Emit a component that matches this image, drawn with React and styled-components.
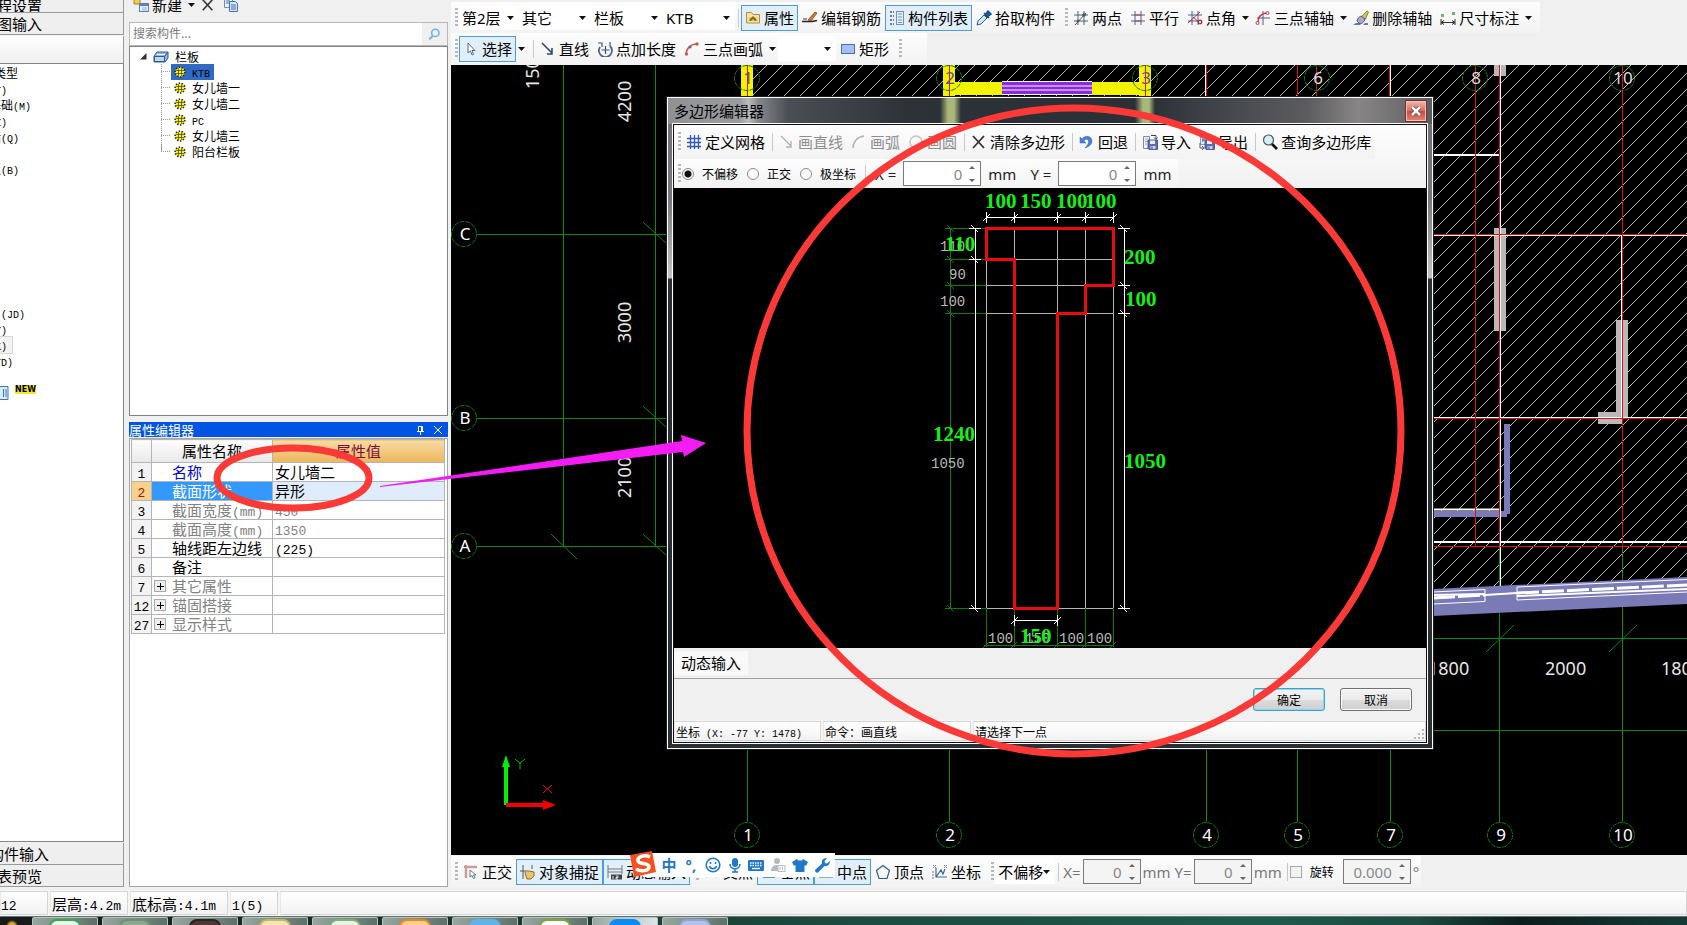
import React, { useState } from 'react';
import styled, { createGlobalStyle, css } from 'styled-components';

const uiFont = "'Noto Sans', 'Noto Sans CJK SC', sans-serif";
const songFont = "'Noto Sans CJK SC', 'Liberation Sans', sans-serif";

const GlobalStyle = createGlobalStyle`
  * {
    box-sizing: border-box;
  }

  body {
    margin: 0;
    overflow: hidden;
    background: #f0f0f0;
    color: #000;
    font-family: ${uiFont};
    font-size: 15px;
  }

  button, input, select {
    font-family: inherit;
    font-size: inherit;
    color: inherit;
    margin: 0;
  }
`;

/* ---------- layout ---------- */

const Shell = styled.div`
  position: relative;
  display: flex;
  flex-direction: column;
  height: 100vh;
  overflow: hidden;
`;

const Body = styled.div`
  flex: 1;
  min-height: 0;
  display: grid;
  grid-template-columns: 129px 322px minmax(0, 1fr);
`;

const Workspace = styled.main`
  display: flex;
  flex-direction: column;
  min-width: 0;
`;

const Column = styled.div`
  display: flex;
  flex-direction: column;
  min-height: 0;
  padding-right: ${({ $gap }) => $gap}px;
  overflow: hidden;
`;

/* ---------- module column ---------- */

const ModuleButton = styled.button`
  height: ${({ $height }) => $height || 22}px;
  flex-shrink: 0;
  padding: 0;
  border: solid #9a9a9a;
  border-width: 0 1px 1px 0;
  background: #efefef;
  display: flex;
  align-items: center;
  overflow: hidden;
`;

const Cut = styled.span`
  display: flex;
  flex-shrink: 0;
  justify-content: flex-end;
  align-items: center;
  overflow: hidden;
  white-space: nowrap;
  line-height: 20px;
  width: ${({ $end }) => $end}px;
`;

const ModuleHeader = styled.div`
  height: 27px;
  flex-shrink: 0;
  margin-top: 1px;
  border-right: 1px solid #9a9a9a;
  background: linear-gradient(#fff, #efefef);
`;

const ModuleList = styled.ul`
  flex: 1;
  margin: 0 0 1px;
  padding: 1px 0;
  list-style: none;
  background: #fff;
  border: solid #868686;
  border-width: 1px 1px 1px 0;
  font-family: ${songFont};
  font-size: 12px;
`;

const ModuleItem = styled.li`
  height: 16px;
  display: flex;
  align-items: center;

  ${({ $active }) => $active && css`
    width: 12px;
    background: #f3f3f3;
    box-shadow: 0 0 0 1px #d8d8d8;
  `}
`;

const NewRow = styled.li`
  height: 28px;
  margin-top: 16px;
  display: flex;
  gap: 6px;
`;

const NewBadge = styled.b`
  align-self: flex-start;
  background: #f7e733;
  font-family: 'DejaVu Sans', sans-serif;
  font-size: 8px;
  line-height: 9px;
`;

const ListEnd = styled.div`
  height: 3px;
  flex-shrink: 0;
`;

/* ---------- component list ---------- */

const ListTools = styled.div`
  height: 10px;
  margin-bottom: 12px;
  display: flex;
  flex-shrink: 0;
  align-items: center;
`;

const SearchBar = styled.div`
  height: 24px;
  flex-shrink: 0;
  display: flex;
  border: 1px solid #b8b8b8;
`;

const SearchInput = styled.input`
  flex: 1;
  min-width: 0;
  border: 0;
  padding: 0 3px 4px;
  font-family: ${songFont};
  font-size: 12px;

  &::placeholder {
    color: #7c7c7c;
    opacity: 1;
  }
`;

const SearchButton = styled.button`
  width: 25px;
  padding: 0;
  border: 0;
  background: #f0f0f0;
  display: grid;
  place-items: center;
`;

const Tree = styled.ul`
  height: 370px;
  flex-shrink: 0;
  margin: 0;
  padding: 1px 0 0 10px;
  list-style: none;
  background: #fff;
  border: 1px solid #828282;
  font-family: ${songFont};
  font-size: 12px;
`;

const TreeRoot = styled.div`
  height: 16px;
  display: flex;
  align-items: center;
  gap: 6px;
`;

const TreeBranch = styled.ul`
  margin: 0 0 0 21px;
  padding: 0;
  list-style: none;
`;

const TreeLeaf = styled.li`
  height: 16px;
  display: flex;
  align-items: center;
  background:
    linear-gradient(90deg, #999 1px, transparent 1px) 0 7px / 2px 1px repeat-x,
    linear-gradient(#999 1px, transparent 1px) 0 0 / 1px 2px repeat-y;

  &:last-child {
    background:
      linear-gradient(90deg, #999 1px, transparent 1px) 0 7px / 2px 1px repeat-x,
      linear-gradient(#999, #999) 0 0 / 1px 8px no-repeat;
  }
`;

const LeafButton = styled.button`
  height: 16px;
  margin-left: 10px;
  padding: 0 4px 0 3px;
  border: 0;
  background: ${({ $selected }) => ($selected ? '#316ac5' : '#fff')};
  display: flex;
  align-items: center;
  gap: 6px;
  font-size: 12px;
  line-height: 16px;
`;

const TreeFill = styled.span`
  flex: 1;
  height: 16px;
  background: #fff;
`;

/* ---------- property editor ---------- */

const EditorTitle = styled.div`
  height: 15px;
  flex-shrink: 0;
  margin-top: 6px;
  padding-right: 4px;
  background: #0054e3;
  color: #fff;
  font-family: ${songFont};
  font-size: 13px;
  line-height: 15px;
  display: flex;
  align-items: center;
  gap: 6px;
`;

const EditorName = styled.span`
  flex: 1;
`;

const TinyButton = styled.button`
  width: 12px;
  height: 12px;
  padding: 0;
  border: 0;
  background: none;
  display: grid;
  place-items: center;
`;

const EditorBody = styled.div`
  flex: 1;
  margin: 1px 0 3px;
  padding: 0 2px 0 1px;
  background: #fff;
  border: 1px solid #a5a5a5;
`;

const PropTable = styled.table`
  width: 100%;
  table-layout: fixed;
  border-collapse: collapse;
  font-family: ${songFont};
  font-size: 15px;
  line-height: 18px;

  th, td {
    height: 19px;
    padding: 0;
    border: 1px solid #b4b4b4;
    font-weight: 400;
    white-space: nowrap;
    overflow: hidden;
  }

  thead th {
    height: 23px;
    background: linear-gradient(#fdfdfd, #e8e8e8);
  }
`;

const IndexCol = styled.col`
  width: 20px;
`;

const NameCol = styled.col`
  width: 121px;
`;

const ValueHead = styled.th`
  && {
    background: linear-gradient(#f7dba6, #edb65a);
    color: #7c0d3a;
  }
`;

const IndexCell = styled.th`
  background: ${({ $active }) => ($active ? '#fbd08a' : '#f3f3f3')};
  color: ${({ $active }) => ($active ? '#a01818' : '#000')};
`;

const toneColors = { link: '#0000c8', dim: '#828282', plain: '#000' };

const NameCell = styled.td`
  color: ${({ $tone, $active }) => ($active ? '#fff' : toneColors[$tone])};
  background: ${({ $active }) => ($active ? '#3399ff' : '#fff')};
`;

const NameInner = styled.div`
  display: grid;
  grid-template-columns: 18px 1fr;
  align-items: center;
  height: 18px;
  padding-left: 2px;
`;

const ValueCell = styled.td`
  && {
    padding-left: 2px;
  }
  color: ${({ $dim }) => ($dim ? '#828282' : '#000')};
  background: ${({ $active }) => ($active ? '#deecfb' : '#fff')};
`;

const Expander = styled.button`
  width: 12px;
  height: 12px;
  padding: 0;
  border: 1px solid #a9a9a9;
  background: #eee;
  display: grid;
  place-items: center;
  color: #000;
`;

/* latin runs are half the width of the chinese glyphs */
const Mono = styled.span`
  font-family: 'Liberation Mono', monospace;
  font-size: ${({ $small }) => ($small ? 10 : 13)}px;
  line-height: 10px;
  white-space: pre;
`;

const Song = ({ text, small }) => (
  <span>
    {text.split(/([ -~]+)/).filter(Boolean).map((part, i) => (
      /^[ -~]/.test(part) ? <Mono key={i} $small={small}>{part}</Mono> : part
    ))}
  </span>
);

/* ---------- toolbars ---------- */

const ToolArea = styled.header`
  padding-top: 2px;
  height: 65px;
  flex-shrink: 0;
`;

const Toolbar = styled.div`
  display: flex;
  align-items: center;
  width: fit-content;
  height: ${({ $height }) => $height || 31}px;
  padding-right: ${({ $end }) => $end || 0}px;
  background: linear-gradient(#fdfdfd, #f3f3f3);
  white-space: nowrap;
`;

const Grip = styled.span`
  width: 3px;
  height: 20px;
  flex-shrink: 0;
  margin: 0 1px 0 6px;
  background: repeating-linear-gradient(#b8b8b8 0 2px, transparent 2px 4px);

  &:first-child {
    margin-left: 4px;
  }
`;

const Separator = styled.span`
  width: 1px;
  height: 18px;
  flex-shrink: 0;
  margin: 0 2px 0 3px;
  background: #c8c8c8;
`;

const ToolButton = styled.button`
  height: 26px;
  flex-shrink: 0;
  display: flex;
  align-items: center;
  gap: 3px;
  padding: 0 3px;
  border: 1px solid ${({ $on }) => ($on ? '#4d9be6' : 'transparent')};
  background: ${({ $on }) => ($on ? '#e1effb' : 'transparent')};
  color: ${({ disabled }) => (disabled ? '#8e8e8e' : '#000')};
  font-size: 15px;
  line-height: 20px;
  white-space: nowrap;
`;

const ArrowButton = styled.button`
  width: 11px;
  height: 24px;
  flex-shrink: 0;
  padding: 0;
  border: 0;
  background: none;
  display: grid;
  place-items: center;
  margin-right: ${({ $split }) => ($split ? 3 : 0)}px;
`;

const Combo = styled.span`
  width: ${({ $width }) => $width}px;
  height: 25px;
  flex-shrink: 0;
  display: grid;
  grid-template-columns: 1fr 12px;
  align-items: center;
  background: #fff;
`;

const ComboSelect = styled.select`
  appearance: none;
  width: 100%;
  height: 25px;
  padding: 0 0 0 3px;
  border: 0;
  background: transparent;
  overflow: hidden;
`;

const Unit = styled.label`
  padding: 0 ${({ $wide }) => ($wide ? 7 : 2)}px;
  color: ${({ $dim }) => ($dim ? '#777' : '#222')};
  font-size: 15px;
`;

const SpinBox = styled.span`
  width: ${({ $width }) => $width}px;
  height: 25px;
  flex-shrink: 0;
  display: grid;
  grid-template-columns: 1fr 16px;
  align-items: center;
  border: 1px solid #7a7a7a;
  background: ${({ $white }) => ($white ? '#fff' : '#f4f4f4')};
`;

const SpinInput = styled.input`
  width: 100%;
  min-width: 0;
  height: 22px;
  padding: 0 2px 0 0;
  border: 0;
  background: transparent;
  text-align: right;
  color: #888;
`;

const Choice = styled.label`
  display: flex;
  align-items: center;
  gap: 8px;
  margin-right: 9px;
  font-family: ${songFont};
  font-size: 12px;
`;

const Radio = styled.input`
  appearance: none;
  width: 12px;
  height: 12px;
  border: 1px solid #8a8a8a;
  border-radius: 50%;
  background: #fdfdfd;

  &:checked {
    background: radial-gradient(circle, #111 0 3px, #fdfdfd 4px);
  }
`;

const Check = styled.input`
  appearance: none;
  width: 12px;
  height: 12px;
  border: 1px solid #a5a5a5;
  background: #f4f4f4;
`;

const RadioGroup = styled.div`
  display: flex;

  label:last-child {
    margin-right: 6px;
  }
`;

const SnapBar = styled.footer`
  height: 35px;
  flex-shrink: 0;
  padding-top: 1px;
`;

/* ---------- drawing area ---------- */

const Stage = styled.section`
  position: relative;
  flex: 1;
  min-height: 0;
  background: #000;
`;

const Plan = styled.svg`
  display: block;
  position: absolute;
  inset: 0;
  width: 100%;
  height: 100%;
  font-family: 'Noto Sans', sans-serif;
  font-size: 18px;
`;

const Window = styled.div`
  position: absolute;
  left: 216px;
  top: 32px;
  width: 766px;
  padding: 0 5px 5px;
  border: 1px solid #fff;
  outline: 1px solid #1b1d20;
  background: linear-gradient(#6d7075, #77787b 100px, #c4c4c4 180px, #2b3036 181px);
`;

const WindowTitle = styled.div`
  height: 26px;
  margin: 0 -5px;
  padding: 0 6px;
  display: flex;
  align-items: center;
  justify-content: space-between;
  background:
    linear-gradient(90deg, transparent 72px, #c9cdd0aa 80px, transparent 90px),
    linear-gradient(90deg, transparent 272px, #a9b878 280px 286px, transparent 293px),
    linear-gradient(90deg, transparent 467px, #a9b878 475px 481px, transparent 487px),
    linear-gradient(90deg, #8f9194, #9b9da0 80px, #4a4f54 120px, #2c3238 240px, #2b3036 480px, #44484d 560px, #5c5c60 640px, #8a8585 690px, #5b5c60);
`;

const WindowName = styled.h1`
  margin: 0;
  font-size: 15px;
  font-weight: 400;
  line-height: 20px;
`;

const CloseButton = styled.button`
  width: 20px;
  height: 20px;
  padding: 0;
  border: 1px solid #f0c0ba;
  outline: 1px solid #6a302a;
  background: linear-gradient(#efb0a4, #dc6a5a 50%, #c94a3a 51%, #e08070);
  display: grid;
  place-items: center;
`;

const WindowBody = styled.div`
  border: 1px solid #111;
  outline: 1px solid #fff;
  background: #f0f0f0;
`;

const WindowTools = styled.div`
  background: linear-gradient(#fefefe, #f1f1f1);
`;

const SectionView = styled.svg`
  display: block;
  width: 100%;
  height: 460px;
  background: #000;
`;

const InputBar = styled.div`
  height: 31px;
  border-bottom: 1px solid #a0a0a0;
  display: flex;
  align-items: center;
`;

const InputToggle = styled.button`
  height: 24px;
  padding: 0 7px;
  border: 0;
  background: #f9f9f9;
  line-height: 22px;
`;

const Actions = styled.div`
  height: 41px;
  padding-right: 14px;
  display: flex;
  align-items: center;
  justify-content: flex-end;
  gap: 15px;
`;

const ActionButton = styled.button`
  width: 72px;
  height: 23px;
  padding: 0;
  border: 1px solid ${({ $main }) => ($main ? '#3c9fd0' : '#707070')};
  border-radius: 3px;
  background: linear-gradient(#f4f4f4, #ebebeb 50%, #dcdcdc 51%, #cfcfcf);
  box-shadow: inset 0 0 0 1px ${({ $main }) => ($main ? '#8fd8f5' : '#fbfbfb')};
  font-family: ${songFont};
  font-size: 12px;
  line-height: 18px;
`;

const StatusRow = styled.div`
  display: flex;
  gap: 2px;
  height: ${({ $height }) => $height}px;
  flex-shrink: 0;
  padding: 1px 0;
  background: #f4f4f4;
  font-family: ${songFont};
  font-size: ${({ $small }) => ($small ? 12 : 15)}px;
`;

const StatusCell = styled.div`
  flex: ${({ $width }) => ($width ? `0 0 ${$width}px` : '1')};
  padding-left: ${({ $flush }) => ($flush ? 0 : 1)}px;
  display: flex;
  align-items: center;
  border: 1px solid #d5d5d5;
  border-left-color: #e8e8e8;
  background: linear-gradient(#fff, #f2f2f2);
  white-space: nowrap;
`;

const ResizeMark = styled.span`
  margin-left: auto;
  align-self: flex-end;
  line-height: 0;
`;

/* ---------- input method bar ---------- */

const ImeBar = styled.div`
  position: absolute;
  left: 178px;
  bottom: -22px;
  height: 24px;
  width: 206px;
  padding: 0 3px 0 30px;
  display: flex;
  align-items: center;
  justify-content: space-between;
  background: linear-gradient(90deg, transparent 14px, #fff 14px);
  z-index: 2;
`;

const ImeKey = styled.button`
  width: 20px;
  height: 22px;
  padding: 0;
  border: 0;
  background: none;
  color: #1f78c8;
  font-size: 15px;
  font-weight: 700;
  line-height: 20px;
  display: grid;
  place-items: center;
`;

const ImeLogo = styled.span`
  position: absolute;
  left: 0;
  top: -3px;
  line-height: 0;
`;

/* ---------- taskbar ---------- */

const Taskbar = styled.nav`
  height: 9px;
  flex-shrink: 0;
  display: flex;
  gap: 4px;
  padding-left: 32px;
  border-top: 1px solid #5e7670;
  background:
    radial-gradient(circle at 12px 9px, #e8a33a 3px, transparent 6px) 0 0 / 30px 9px no-repeat,
    linear-gradient(90deg, #171a18, #1d4a40 50%, #1c5a4c 75%, #1d4a42 84%, #0c1c1c 90%, #163a38);
`;

const Task = styled.button`
  width: 66px;
  height: 8px;
  flex-shrink: 0;
  padding: 1px 0 0;
  border: 1px solid #b8c2be;
  border-bottom: 0;
  border-radius: 2px 2px 0 0;
  background: linear-gradient(100deg, #98a8a0, ${({ $lit }) => ($lit ? '#dfe6ea' : '#5d7068')});
  display: flex;
  justify-content: center;
  overflow: hidden;
`;

const TaskIcon = styled.span`
  width: 32px;
  height: 14px;
  flex-shrink: 0;
  border-radius: 8px 8px 0 0;
  border: 2px solid ${({ $edge }) => $edge};
  background: ${({ $fill }) => $fill};
`;

const Annotations = styled.svg`
  position: absolute;
  left: 0;
  top: 0;
  width: 100%;
  height: 100%;
  pointer-events: none;
  z-index: 3;
`;

/* ---------- icons ---------- */

const Glyph = ({ children, size = 16 }) => (
  <svg width={size} height={size} viewBox="0 0 16 16" fill="none" aria-hidden="true">{children}</svg>
);

const grid = <path d="M5 1v14M11 1v14M1 5h14M1 11h14" stroke="#4a5f94" />;

const floppy = (
  <>
    <path d="M6 6h9.500v9.500H7L6 14.500z" fill="#5b6dae" stroke="#3a4a86" strokeWidth=".8" />
    <path d="M8 6.500h5v3.500H8z" fill="#e8edf8" />
    <path d="M8.500 12h5v3h-5z" fill="#c9d2ea" />
    <path d="M10 12.500v2.500" stroke="#3a4a86" />
  </>
);

const icons = {
  props: (
    <>
      <path d="M1.500 13V2.500h5l1.500 2h6.500V13z" fill="#fbe3a0" stroke="#b98a3c" />
      <path d="M3 8h10M3 10.500h10" stroke="#e6bb62" />
      <path d="M4 10l4-4 4 4-2 1-2-2-2 2z" fill="#7a6a20" />
    </>
  ),
  rebar: (
    <>
      <path d="M0 11.500h10l5-1" stroke="#222" strokeWidth="1.500" />
      <path d="M6 10l7-8 2 1-6 8z" fill="#c9813a" stroke="#6b3c12" strokeWidth=".7" />
      <path d="M1 9h4" stroke="#333" />
    </>
  ),
  list: (
    <>
      <path d="M1 2h4M1 6h4M1 10h4M1 14h4" stroke="#557" strokeWidth="1.500" strokeDasharray="2 1" />
      <rect x="7.500" y="1.500" width="7" height="13" fill="#e9f2fc" stroke="#6d8fbf" />
      <path d="M9 4h4M9 7h4M9 10h4M9 12.500h4" stroke="#6d8fbf" />
    </>
  ),
  dropper: (
    <>
      <path d="M1 15l1-4 6-6 3 3-6 6z" fill="#cfe6f7" stroke="#2b5f8f" />
      <path d="M8 3l5 5M9 5l3-4 3 3-4 3z" fill="#1c5fa8" stroke="#1c4f88" strokeWidth="1.500" />
    </>
  ),
  twoPoint: <>{grid}<path d="M2 15L13 3" stroke="#8a3a3a" /><circle cx="5" cy="11" r="1.300" fill="#2e6b2d" /><circle cx="11" cy="5" r="1.800" fill="#2e6b2d" /></>,
  parallel: <>{grid}<path d="M5 5h6M5 11h6" stroke="#c03a3a" /></>,
  pointAngle: <>{grid}<path d="M1 13L13 2M6 7l7 6" stroke="#b02a3a" /><circle cx="13" cy="12" r="1.800" fill="#fff" stroke="#c02020" strokeWidth="1.300" /></>,
  arcAxis: <><path d="M8 1v14M2 8h13" stroke="#4a5f94" /><path d="M3 12C3 7 6 4 11 3" stroke="#cc3a4a" strokeWidth="1.500" /><circle cx="2.500" cy="13" r="1.500" stroke="#cc3a4a" /><circle cx="12.500" cy="3" r="1.500" stroke="#cc3a4a" /></>,
  brush: (
    <>
      <path d="M0 15h7l1-2H3zM10 15h5v-2h-3z" fill="#55809f" />
      <path d="M8 7l6-6 1.500 1-3 7z" fill="#cfc84a" stroke="#5c5c21" strokeWidth=".7" />
      <path d="M4 11c1-3 2-4 4-5l4 3c-1 3-2 4-5 5z" fill="#b3a4d8" stroke="#44407a" strokeWidth=".8" />
    </>
  ),
  dimension: <><path d="M1 9v6M15 9v6M1 12.500h14M4 10.500l-3 2 3 2M12 10.500l3 2-3 2" stroke="#333" /><path d="M1 4h3v3H1zM12 2h3v3h-3z" fill="#6db36d" /></>,
  cursor: <path d="M5 2v10l2.500-2 1.500 4 1.500-.7L9 9.500h3z" fill="#fff" stroke="#556b85" />,
  line: <path d="M2 2l10 10M12 7v6H7" stroke="#27456f" strokeWidth="1.500" />,
  extend: <><path d="M3 6a6.500 6.500 0 1 0 10-1" stroke="#46689a" strokeWidth="1.800" /><path d="M1 2h4v4M8.500 5v8M4.500 9h8M13 1v4" stroke="#3e5379" strokeWidth="1.200" /></>,
  arc: <><path d="M2 14C2 8 6 3 13 3" stroke="#bf5d50" strokeWidth="1.600" /><circle cx="2.500" cy="13" r="1.700" fill="#bf5d50" /><circle cx="6" cy="6" r="1.500" fill="#668" /><circle cx="13" cy="3" r="1.700" fill="#bf5d50" /></>,
  rect: <rect x="1.500" y="3.500" width="13" height="9" fill="#a5c0f5" stroke="#4a6cc0" />,
  mesh: <path d="M4.500 1v14M8.500 1v14M12.500 1v14M1 4.500h14M1 8.500h14M1 12.500h14" stroke="#2f5cae" strokeWidth="1.300" />,
  grayLine: <path d="M2 2l10 10M12 7v6H7" stroke="#b0b0b0" strokeWidth="1.300" />,
  grayArc: <path d="M2 14C2 8 6 3 13 2" stroke="#b0b0b0" strokeWidth="1.500" />,
  grayCircle: <circle cx="8" cy="8" r="6" stroke="#c5c5c5" strokeWidth="1.500" />,
  cross: <path d="M2 2l11 12M13 2L2 14" stroke="#333" strokeWidth="1.800" />,
  undo: <path d="M1 3v6h6L5 7c1.500-2.500 4.500-2 4.500.5C9.500 10 8 12 6 14c4.500-1.500 7-4 7-7 0-5-7-6.500-10-2z" fill="#4a7fd6" stroke="#3565b8" strokeWidth=".5" />,
  importDisk: <><path d="M1.500 2.500h6v12h-6z" fill="#eef2fb" stroke="#7a88b0" /><path d="M3 5h3M3 7.500h3M3 10h2" stroke="#9aa8c8" />{floppy}<path d="M9 1.500h5V5M12 3.500l2 2 1.500-2" stroke="#445" /></>,
  exportDisk: <><path d="M1.500 1.500h7v9h-7z" fill="#e2e9f8" stroke="#8a98c0" />{floppy}<path d="M1 9v5h3M3 12l2 2-2 2" stroke="#556" /><path d="M3 4v4l4-2z" fill="#4d8bd6" /></>,
  find: <><circle cx="6.500" cy="6" r="5" fill="#d4effc" stroke="#555" strokeWidth="1.200" /><path d="M10 10l5 5" stroke="#151515" strokeWidth="2.600" /></>,
  ortho: <><path d="M1 3h13M3 1v13" stroke="#cf9a9a" strokeWidth="2.500" /><path d="M7 6v7l2-1.500 1.500 3 1.500-.7-1.500-2.800h2.500z" fill="#fff" stroke="#5a7a90" /></>,
  snap: <><path d="M3 1v14M0 7h6M12 1v4" stroke="#555" /><path d="M5 9c1-3 3-2 4-2l5 1v4l-3 3H7z" fill="#edc569" stroke="#8e6a2b" /></>,
  dyn: <><path d="M1 1v13M15 1v9M1 5h14M1 8h14" stroke="#777" /><path d="M4 10.500h11v5H4z" fill="#444" /><path d="M6 12v3M9 12h2v1.500H9V15h2" stroke="#fff" strokeWidth=".8" /></>,
  snapCross: <path d="M2 2l11 11M13 2L2 13" stroke="#8a5b5b" strokeWidth="1.500" />,
  perp: <path d="M8 2v11M2 13h12" stroke="#3c70a4" strokeWidth="1.500" />,
  mid: <path d="M1 13h14L8 3z" stroke="#3c70a4" />,
  vertex: <path d="M8 1.500l6.500 5L12 14.500H4L1.500 6.500z" stroke="#2f5c8c" strokeWidth="1.200" />,
  coord: <><path d="M4 4v9h11M4 13l5-7 2 4 2-5" stroke="#39688f" strokeWidth="1.200" /><path d="M1 1l3 3M4 1L1 4M12 1l3 3M15 1l-3 3M1 7v9" stroke="#777" strokeDasharray="2 1" /></>,
  create: <><path d="M1 1h6v6H1z" fill="#f0cf4a" stroke="#a5851c" /><rect x="6.500" y="6.500" width="9" height="8" fill="#e8f1fc" stroke="#5a80bb" /><path d="M7 8h8" stroke="#5a80bb" strokeWidth="2" /><path d="M9 11h5M9 13h5" stroke="#8fb0dd" /></>,
  copy: <><path d="M1.500 1.500h8v9h-8z" fill="#e8f0fb" stroke="#6b8cc2" /><path d="M6.500 4.500h6l2 2v8h-8z" fill="#d5e4f8" stroke="#4a70b2" /><path d="M8 8h5M8 10h5M8 12h5M3 4h4M3 6h3" stroke="#4a70b2" /></>,
  folder: <><path d="M1 8l3-4h11v6l-3 4H1z" fill="#8fb8e6" stroke="#2d5a94" /><path d="M1.500 8.500h10v5h-10z" fill="#bcd8f5" stroke="#2d5a94" /><path d="M4 6.500h8" stroke="#fff" /><path d="M11.500 8.500L15 4" stroke="#2d5a94" /></>,
  part: <><circle cx="8" cy="8" r="6.500" fill="#f6ec3c" stroke="#2a2805" strokeWidth="2" strokeDasharray="2 2" /><path d="M6 3v10M10 3v10M3 6h10M3 10h10" stroke="#4a4608" /></>,
  search: <><circle cx="9" cy="6" r="4.500" fill="#e5f4fd" stroke="#76b1e2" strokeWidth="2" /><path d="M6 9.500L1.500 14" stroke="#76b1e2" strokeWidth="2.500" /></>,
  smile: <><circle cx="8" cy="8" r="6.800" stroke="#1f78c8" strokeWidth="1.600" /><path d="M5.500 5v2M10.500 5v2M4.500 9c1 3.500 6 3.500 7 0" stroke="#1f78c8" strokeWidth="1.500" /></>,
  mic: <><rect x="5" y="1" width="6" height="9" rx="3" fill="#1f78c8" /><path d="M3 7c0 6.500 10 6.500 10 0M8 12v3M5 15h6" stroke="#1f78c8" strokeWidth="1.500" /></>,
  keyboard: <><rect x="0" y="3" width="16" height="11" rx="1" fill="#1f78c8" /><path d="M2 6h12M2 8.500h12" stroke="#fff" strokeWidth="1.300" strokeDasharray="1.500 1" /><path d="M4 11.500h8" stroke="#fff" strokeWidth="1.300" /></>,
  person: <><circle cx="7" cy="4" r="3" fill="#b5bac4" /><path d="M1 14c0-8 11-8 12 0z" fill="#b5bac4" /><rect x="8" y="8.500" width="7" height="6" fill="#fff" stroke="#b5bac4" /><path d="M10 10v3M12.500 10v3" stroke="#b5bac4" /></>,
  shirt: <path d="M5 2c1 2 5 2 6 0l5 3-2 4-1.500-1v7h-9V8L2 9 0 5z" fill="#1f78c8" />,
  wrench: <path d="M1.500 12.500L8 6.500C7 3.500 9.500.5 13 1.500L10.500 4l.5 2 2 .5 2.500-2.500c1 3.500-2 6-5 5L4 15.500c-1.500 1-4-1.500-2.500-3z" fill="#1f78c8" />,
};

const Icon = ({ name, size }) => <Glyph size={size}>{icons[name]}</Glyph>;

const Caret = () => (
  <svg width="7" height="4" aria-hidden="true"><path d="M0 0h7L3.500 4z" fill="#111" /></svg>
);

const SpinArrows = () => (
  <svg width="15" height="22" aria-hidden="true"><path d="M5 6h6L8 3zM5 16h6l-3 3z" fill="#666" /></svg>
);

const Tool = ({ icon, label, on, disabled, menu, split }) => (
  <>
    <ToolButton type="button" $on={on} disabled={disabled}><Icon name={icon} />{label}</ToolButton>
    {menu && <ArrowButton type="button" aria-label={label} $split={split}><Caret /></ArrowButton>}
  </>
);

const Picker = ({ label, value, width }) => (
  <Combo $width={width}>
    <ComboSelect aria-label={label} defaultValue={value}>
      <option value={value}>{value}</option>
    </ComboSelect>
    <Caret />
  </Combo>
);

const Spin = ({ id, width, value, white }) => (
  <SpinBox $width={width} $white={white}>
    <SpinInput id={id} type="text" defaultValue={value} />
    <SpinArrows />
  </SpinBox>
);

/* ---------- data ---------- */

const modules = [
  ['类型', 18], ['(T)', 7], ['基础(M)', 31], ['(Z)', 7], ['墙(Q)', 19], null, ['板(B)', 19],
  null, null, null, null, null, null, null, null,
  ['(JD)', 25], ['(Y)', 7], ['(K)', 7, true], ['(TD)', 13],
];

const parts = ['KTB', '女儿墙一', '女儿墙二', 'PC', '女儿墙三', '阳台栏板'];

const properties = [
  { no: 1, name: '名称', value: '女儿墙二', tone: 'link' },
  { no: 2, name: '截面形状', value: '异形', tone: 'plain' },
  { no: 3, name: '截面宽度(mm)', value: '450', tone: 'dim' },
  { no: 4, name: '截面高度(mm)', value: '1350', tone: 'dim' },
  { no: 5, name: '轴线距左边线', value: '(225)', tone: 'plain' },
  { no: 6, name: '备注', value: '', tone: 'plain' },
  { no: 7, name: '其它属性', value: '', tone: 'dim', group: true },
  { no: 12, name: '锚固搭接', value: '', tone: 'dim', group: true },
  { no: 27, name: '显示样式', value: '', tone: 'dim', group: true },
];

const tasks = [
  ['#35a853', '#eaf7ea'], ['#6d8f74', '#8fa68f'], ['#2a2422', '#4a3a34'], ['#c9b56a', '#f1e6b4'],
  ['#7fae7a', '#e9f3e4'], ['#e88a1c', '#ffcf8a'], ['#5fb2e6', '#5fb2e6'], ['#7fa83a', '#fff'],
  ['#0a8cf0', '#0a8cf0', true], ['#8fa4d8', '#b4c2e8'],
];

/* ---------- plan drawing ---------- */

const Bubble = ({ x, y, label, color = '#fff' }) => (
  <g>
    <circle cx={x} cy={y} r="12.500" fill="none" stroke="#0f7a0f" strokeDasharray="5 1" />
    <text x={x + 1} y={y + 6} textAnchor="middle" fontSize="17" fill={color}>{label}</text>
  </g>
);

const bottomAxes = [[747, '1'], [949, '2'], [1206, '4'], [1297, '5'], [1390, '7'], [1500, '9'], [1622, '10']];
const rowAxes = [[234, 'C'], [418, 'B'], [546, 'A']];

const PlanDrawing = () => (
  <Plan aria-hidden="true">
    <defs>
      <pattern id="hatch" width="16" height="16" patternUnits="userSpaceOnUse">
        <path d="M-1 17L17-1" stroke="#b9b9b9" strokeWidth="1" />
      </pattern>
    </defs>
    <g transform="translate(-451 -65)">
      <path d="M753 65H1687V578L1433 590V300H753z" fill="url(#hatch)" />

      <g stroke="#0b8a0b" fill="none">
        <path d="M563.500 65V546M655.500 65V546" />
        {rowAxes.map(([y]) => <path key={y} d={`M476 ${y}.500H670M643 ${y - 12}l24 22`} />)}
        <path d="M551 534l26 25" />
        <path d="M1433 638.500H1687M1433 730.500H1687M1499.500 546V822M1622.500 546V822" />
        <path d="M1486 652l28-27M1609 652l28-27" />
        {bottomAxes.slice(0, 5).map(([x]) => <path key={x} d={`M${x}.500 740V822`} />)}
      </g>

      <path d="M741 65h12v31h-12zM943 65h12v31h-12zM1139 65h12v31h-12zM955 82h47v13h-47zM1092 82h47v13h-47z" fill="#f3f300" />
      <path d="M1002 81h90v14h-90z" fill="#8a2be2" />
      <path d="M1002 81.500h90M1002 86h90M1002 90h90M1002 94.500h90" stroke="#fff" />
      <path d="M747.500 65v32M949.500 65v32M1145.500 65v32" stroke="#d01818" />

      <path d="M1494 65h12v11h-12zM1494 228h12v103h-12zM1616 320h12v98h-12zM1598 412h24v12h-24z" fill="#bdb6b6" />
      <path d="M1504 424h6v90h-3v3h-74v-6h71z" fill="#7a7ab6" />
      <path d="M1433 589l254-12v27l-254 12z" fill="#7a7ab6" />
      <g stroke="#fff" fill="none">
        <path d="M1205.500 65v32M1390.500 65v32M1500.500 65V586M1621.500 235V418" />
        <path d="M1433 235.500H1687M1433 417.500H1687" />
        <path d="M1433 155h66M1433 509.500h66M1433 542H1687" strokeWidth="2" />
        <path d="M1433 592l52-2.500v12l-52 2.500M1517 587l170-7.500M1517 587v13l170-8" />
        <path d="M1433 598l52-3M1517 593l170-8" strokeWidth="3" strokeDasharray="22 3" />
        <path d="M1485 595l32-2M1433 595l52-1M1517 596l170-7" strokeWidth="2" />
      </g>
      <g stroke="#e01010" fill="none">
        <path d="M1206.500 65v32M1297.500 65v32M1316.500 65v32M1389.500 65v32M1475.500 65V546M1499.500 65V546M1622.500 65V546" />
        <path d="M1433 234.500H1687M1433 418.500H1687M1433 546.500H1687" />
      </g>

      {rowAxes.map(([y, label]) => <Bubble key={label} x={464} y={y} label={label} />)}
      {bottomAxes.map(([x, label]) => <Bubble key={label} x={x} y={835} label={label} />)}
      {[[747, '1'], [949, '2'], [1145, '3']].map(([x, label]) => (
        <Bubble key={label} x={x} y={78} label={label} color="#6a4a9a" />
      ))}
      {[[1317, '6'], [1475, '8'], [1622, '10']].map(([x, label]) => (
        <Bubble key={label} x={x} y={78} label={label} color="#dcdcdc" />
      ))}

      <g fill="#e6e6e6">
        <text transform="translate(631 122) rotate(-90)">4200</text>
        <text transform="translate(631 343) rotate(-90)">3000</text>
        <text transform="translate(631 498) rotate(-90)">2100</text>
        <text transform="translate(539 89) rotate(-90)">1500</text>
        <text x="1428" y="675">1800</text>
        <text x="1545" y="675">2000</text>
        <text x="1661" y="675">1800</text>
      </g>

      <path d="M504 805v-38h-2l4-12 4 12h-2v38z" fill="#00f000" />
      <path d="M506 803h37v-3l13 5-13 5v-3h-37z" fill="#f00000" />
      <path d="M515 759l5 4 5-4M520 763v6" stroke="#00c000" fill="none" />
      <path d="M543 785l9 8M552 785l-9 8" stroke="#e02020" fill="none" />
    </g>
  </Plan>
);

/* ---------- section drawing ---------- */

const xs = [986, 1014, 1057, 1085, 1113];
const ys = [228, 259, 285, 313, 608];

const HTick = ({ x, y }) => <path d={`M${x}.500 ${y - 5}v11M${x - 3} ${y + 4}l7-7`} />;
const VTick = ({ x, y }) => <path d={`M${x - 6} ${y}.500h12M${x - 4} ${y - 3}l7 7`} />;

const SectionDrawing = () => (
  <SectionView aria-hidden="true">
    <g transform="translate(-674 -188)" fill="none">
      <g stroke="#b4b4b4">
        {xs.map((x) => <path key={x} d={`M${x}.500 228V608`} />)}
        {ys.map((y) => <path key={y} d={`M986 ${y}.500H1113`} />)}
      </g>
      <g stroke="#0b7a0b">
        <path d="M950.500 228V608M984 645.500h130" />
        {ys.map((y) => <path key={y} d={`M945 ${y}.500h41M947 ${y - 3}l7 7`} />)}
        {xs.map((x) => <path key={x} d={`M${x}.500 608v39M${x - 3} 648l6-6`} />)}
      </g>
      <g fontFamily="'Liberation Mono', monospace" fontSize="14" fill="#b8b8b8">
        <text x="940" y="251">110</text>
        <text x="949" y="279">90</text>
        <text x="940" y="306">100</text>
        <text x="931" y="468">1050</text>
        <text x="988" y="643">100</text>
        <text x="1025" y="643">150</text>
        <text x="1059" y="643">100</text>
        <text x="1087" y="643">100</text>
      </g>
      <g stroke="#fff">
        <path d="M986 217.500h127M975.500 228V608M1124.500 228V608M1014 620.500h43" />
        {xs.map((x) => <HTick key={x} x={x} y={217} />)}
        {[1014, 1057].map((x) => <HTick key={x} x={x} y={620} />)}
        {[228, 259, 608].map((y) => <VTick key={y} x={975} y={y} />)}
        {[228, 285, 313, 608].map((y) => <VTick key={y} x={1124} y={y} />)}
      </g>
      <g fontFamily="'Liberation Serif', serif" fontWeight="700" fontSize="21" fill="#16f016">
        <text x="985" y="208">100</text>
        <text x="1020" y="208">150</text>
        <text x="1056" y="208">100</text>
        <text x="1085" y="208">100</text>
        <text x="945" y="251">110</text>
        <text x="1124" y="264">200</text>
        <text x="1125" y="306">100</text>
        <text x="933" y="441">1240</text>
        <text x="1124" y="468">1050</text>
        <text x="1020" y="643">150</text>
      </g>
      <path
        d="M986.500 228.500H1113.500V285.500H1085.500V313.500H1057.500V608.500H1014.500V259.500H986.500z"
        stroke="#e80c0c"
        strokeWidth="3"
      />
    </g>
  </SectionView>
);

/* ---------- sections ---------- */

const ModuleColumn = () => (
  <Column $gap={5}>
    <ModuleButton type="button" $height={13}><Cut $end={42}>工程设置</Cut></ModuleButton>
    <ModuleButton type="button"><Cut $end={42}>绘图输入</Cut></ModuleButton>
    <ModuleHeader />
    <ModuleList>
      {modules.map((item, i) => (
        <ModuleItem key={i} $active={item && item[2]}>
          {item && <Cut $end={item[1]}><Song text={item[0]} small /></Cut>}
        </ModuleItem>
      ))}
      <NewRow>
        <svg width="9" height="18" aria-hidden="true">
          <path d="M-4 1.500h12v13H-4z" fill="#d8e9f8" stroke="#3b78b5" />
          <path d="M3.500 4v8M6 4v8" stroke="#3b78b5" />
        </svg>
        <NewBadge>NEW</NewBadge>
      </NewRow>
    </ModuleList>
    <ModuleButton type="button"><Cut $end={49}>单构件输入</Cut></ModuleButton>
    <ModuleButton type="button"><Cut $end={42}>报表预览</Cut></ModuleButton>
    <ListEnd />
  </Column>
);

const PropertyEditor = () => {
  const [active, setActive] = useState(2);

  return (
    <>
      <EditorTitle>
        <EditorName>属性编辑器</EditorName>
        <TinyButton type="button" aria-label="固定">
          <svg width="9" height="10"><path d="M2.500 6V1.500h4V6M1 6.500h7M4.500 7v3M5.500 1v5" stroke="#fff" fill="none" /></svg>
        </TinyButton>
        <TinyButton type="button" aria-label="关闭">
          <svg width="8" height="8"><path d="M0 0l8 8M8 0L0 8" stroke="#fff" /></svg>
        </TinyButton>
      </EditorTitle>
      <EditorBody>
        <PropTable>
          <colgroup><IndexCol /><NameCol /><col /></colgroup>
          <thead>
            <tr><th aria-label="序号" /><th>属性名称</th><ValueHead>属性值</ValueHead></tr>
          </thead>
          <tbody>
            {properties.map((p) => (
              <tr key={p.no} onClick={() => setActive(p.no)}>
                <IndexCell $active={p.no === active}><Song text={String(p.no)} /></IndexCell>
                <NameCell $tone={p.tone} $active={p.no === active}>
                  <NameInner>
                    {p.group ? (
                      <Expander type="button" aria-label={p.name}>
                        <svg width="7" height="7"><path d="M0 3.500h7M3.500 0v7" stroke="#000" /></svg>
                      </Expander>
                    ) : <span />}
                    <Song text={p.name} />
                  </NameInner>
                </NameCell>
                <ValueCell $dim={p.tone === 'dim'} $active={p.no === active}><Song text={p.value} /></ValueCell>
              </tr>
            ))}
          </tbody>
        </PropTable>
      </EditorBody>
    </>
  );
};

const ComponentColumn = () => (
  <Column $gap={3}>
    <ListTools>
      <Tool icon="create" label="新建" menu />
      <ToolButton type="button" aria-label="删除"><Icon name="cross" size={14} /></ToolButton>
      <ToolButton type="button" aria-label="复制"><Icon name="copy" /></ToolButton>
    </ListTools>
    <SearchBar>
      <SearchInput type="text" aria-label="搜索构件" placeholder="搜索构件..." />
      <SearchButton type="button" aria-label="搜索"><Icon name="search" size={13} /></SearchButton>
    </SearchBar>
    <Tree>
      <li>
        <TreeRoot>
          <svg width="7" height="7"><path d="M6.500 0v6.500H0z" fill="#333" /></svg>
          <Icon name="folder" />
          <span>栏板</span>
        </TreeRoot>
        <TreeBranch>
          {parts.map((part) => (
            <TreeLeaf key={part}>
              <LeafButton type="button" $selected={part === 'KTB'}>
                <Icon name="part" size={12} /><Song text={part} small />
              </LeafButton>
              <TreeFill />
            </TreeLeaf>
          ))}
        </TreeBranch>
      </li>
    </Tree>
    <PropertyEditor />
  </Column>
);

const PolygonEditor = () => (
  <Window role="dialog" aria-label="多边形编辑器">
    <WindowTitle>
      <WindowName>多边形编辑器</WindowName>
      <CloseButton type="button" aria-label="关闭">
        <svg width="12" height="10"><path d="M2 1l8 8M10 1L2 9" stroke="#444" strokeWidth="4" /><path d="M2 1l8 8M10 1L2 9" stroke="#fff" strokeWidth="2.500" /></svg>
      </CloseButton>
    </WindowTitle>
    <WindowBody>
      <WindowTools>
        <Toolbar $height={34}>
          <Grip />
          <Tool icon="mesh" label="定义网格" />
          <Separator />
          <Tool icon="grayLine" label="画直线" disabled />
          <Tool icon="grayArc" label="画弧" disabled />
          <Tool icon="grayCircle" label="画圆" disabled />
          <Separator />
          <Tool icon="cross" label="清除多边形" />
          <Separator />
          <Tool icon="undo" label="回退" />
          <Separator />
          <Tool icon="importDisk" label="导入" />
          <Tool icon="exportDisk" label="导出" />
          <Separator />
          <Tool icon="find" label="查询多边形库" />
        </Toolbar>
        <Toolbar $height={29}>
          <Grip />
          <RadioGroup>
            <Choice><Radio type="radio" name="offset" defaultChecked />不偏移</Choice>
            <Choice><Radio type="radio" name="offset" />正交</Choice>
            <Choice><Radio type="radio" name="offset" />极坐标</Choice>
          </RadioGroup>
          <Separator />
          <Unit htmlFor="polyX" $wide>X =</Unit>
          <Spin id="polyX" width={78} value="0" white />
          <Unit htmlFor="polyX" $wide>mm</Unit>
          <Unit htmlFor="polyY" $wide>Y =</Unit>
          <Spin id="polyY" width={78} value="0" white />
          <Unit htmlFor="polyY" $wide>mm</Unit>
        </Toolbar>
      </WindowTools>
      <SectionDrawing />
      <InputBar><InputToggle type="button">动态输入</InputToggle></InputBar>
      <Actions>
        <ActionButton type="button" $main>确定</ActionButton>
        <ActionButton type="button">取消</ActionButton>
      </Actions>
      <StatusRow $height={22} $small>
        <StatusCell $width={147}><Song text="坐标 (X: -77 Y: 1478)" small /></StatusCell>
        <StatusCell $width={148}>命令：画直线</StatusCell>
        <StatusCell>
          请选择下一点
          <ResizeMark>
            <svg width="12" height="12"><path d="M9 1h2v2H9zM9 5h2v2H9zM9 9h2v2H9zM5 5h2v2H5zM5 9h2v2H5zM1 9h2v2H1z" fill="#bbb" /></svg>
          </ResizeMark>
        </StatusCell>
      </StatusRow>
    </WindowBody>
  </Window>
);

const InputMethod = () => (
  <ImeBar>
    <ImeLogo>
      <svg width="28" height="28" viewBox="0 0 28 28">
        <path d="M1 5l22-4 4 21-22 5z" fill="#f4511e" />
        <path d="M21 7C15 4 8 7 9 11c1 4 11 1 11 6 0 4-8 5-13 2" stroke="#fff" strokeWidth="3.500" fill="none" />
      </svg>
    </ImeLogo>
    <ImeKey type="button">中</ImeKey>
    <ImeKey type="button">°,</ImeKey>
    {['smile', 'mic', 'keyboard', 'person', 'shirt', 'wrench'].map((name) => (
      <ImeKey key={name} type="button" aria-label={name}><Icon name={name} /></ImeKey>
    ))}
  </ImeBar>
);

const App = () => (
  <>
    <GlobalStyle />
    <Shell>
      <Body>
        <ModuleColumn />
        <ComponentColumn />
        <Workspace>
          <ToolArea>
            <Toolbar $end={6}>
              <Grip />
              <Picker label="楼层" value="第2层" width={60} />
              <Picker label="分类" value="其它" width={72} />
              <Picker label="构件类型" value="栏板" width={72} />
              <Picker label="构件" value="KTB" width={72} />
              <Separator />
              <Tool icon="props" label="属性" on />
              <Tool icon="rebar" label="编辑钢筋" />
              <Tool icon="list" label="构件列表" on />
              <Tool icon="dropper" label="拾取构件" />
              <Grip />
              <Tool icon="twoPoint" label="两点" />
              <Tool icon="parallel" label="平行" />
              <Tool icon="pointAngle" label="点角" menu />
              <Tool icon="arcAxis" label="三点辅轴" menu />
              <Tool icon="brush" label="删除辅轴" />
              <Tool icon="dimension" label="尺寸标注" menu />
            </Toolbar>
            <Toolbar $end={24}>
              <Grip />
              <Tool icon="cursor" label="选择" on menu split />
              <Separator />
              <Tool icon="line" label="直线" />
              <Tool icon="extend" label="点加长度" />
              <Tool icon="arc" label="三点画弧" menu />
              <Picker label="绘制方式" value="" width={58} />
              <Tool icon="rect" label="矩形" />
              <Grip />
            </Toolbar>
          </ToolArea>
          <Stage>
            <PlanDrawing />
            <PolygonEditor />
            <InputMethod />
          </Stage>
          <SnapBar>
            <Toolbar>
              <Grip />
              <Tool icon="ortho" label="正交" />
              <Tool icon="snap" label="对象捕捉" on />
              <Tool icon="dyn" label="动态输入" on />
              <Grip />
              <Tool icon="snapCross" label="交点" />
              <Tool icon="perp" label="垂点" on />
              <Tool icon="mid" label="中点" on />
              <Tool icon="vertex" label="顶点" />
              <Tool icon="coord" label="坐标" />
              <Grip />
              <Picker label="偏移方式" value="不偏移" width={60} />
              <Separator />
              <Unit htmlFor="snapX" $dim>X=</Unit>
              <Spin id="snapX" width={58} value="0" />
              <Unit htmlFor="snapX" $dim>mm</Unit>
              <Unit htmlFor="snapY" $dim>Y=</Unit>
              <Spin id="snapY" width={58} value="0" />
              <Unit htmlFor="snapY" $dim>mm</Unit>
              <Separator />
              <Choice><Check type="checkbox" />旋转</Choice>
              <Spin id="snapAngle" width={68} value="0.000" />
              <Unit htmlFor="snapAngle" $dim>°</Unit>
            </Toolbar>
          </SnapBar>
        </Workspace>
      </Body>
      <StatusRow $height={26}>
        <StatusCell $width={48} $flush><Song text="12" /></StatusCell>
        <StatusCell $width={78}><Song text="层高:4.2m" /></StatusCell>
        <StatusCell $width={98}><Song text="底标高:4.1m" /></StatusCell>
        <StatusCell $width={48}><Song text="1(5)" /></StatusCell>
        <StatusCell />
      </StatusRow>
      <Taskbar>
        {tasks.map(([edge, fill, lit], i) => (
          <Task key={i} type="button" aria-label={`窗口 ${i + 1}`} $lit={lit}><TaskIcon $edge={edge} $fill={fill} /></Task>
        ))}
      </Taskbar>
      <Annotations aria-hidden="true">
        <ellipse cx="293" cy="478" rx="76" ry="30" fill="none" stroke="#fb3a38" strokeWidth="7" />
        <path d="M380 486L682 441l-1-6 25 8-22 14-1-5L380 487z" fill="#f41cf4" />
        <ellipse cx="1074" cy="431" rx="327" ry="323" fill="none" stroke="#fb3a38" strokeWidth="7" />
      </Annotations>
    </Shell>
  </>
);

export default App;
